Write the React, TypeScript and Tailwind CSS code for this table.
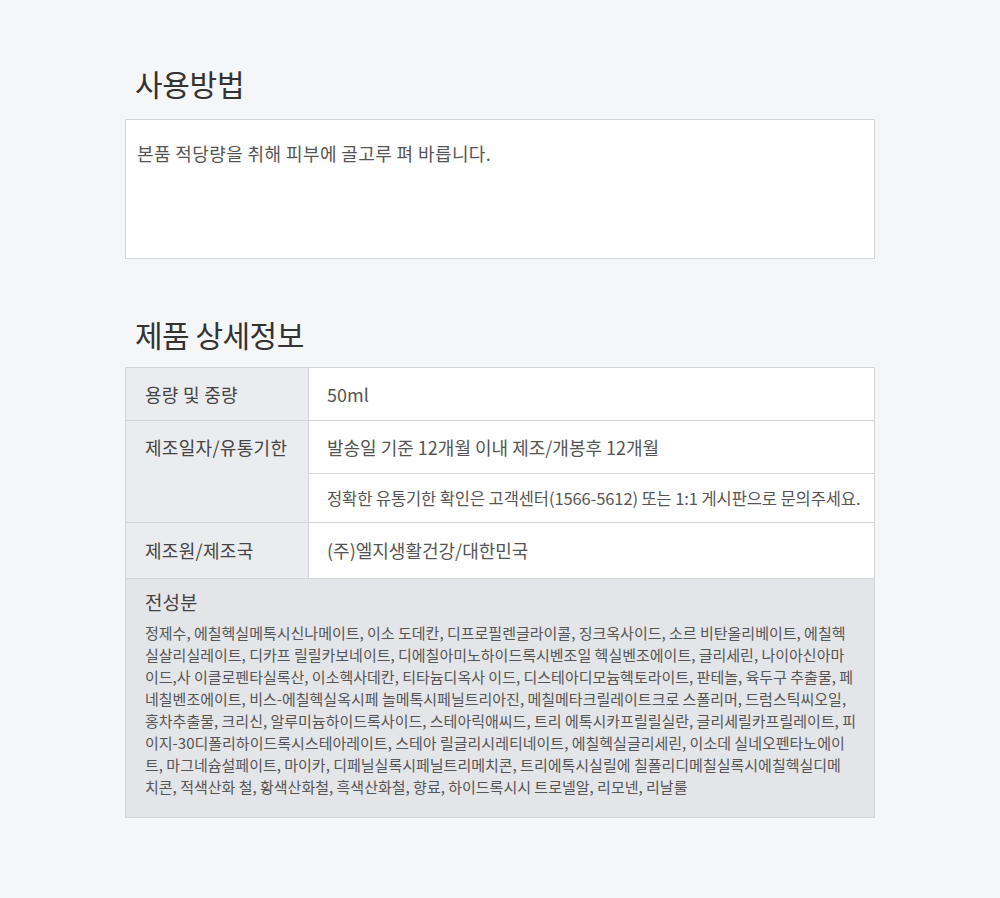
import React from 'react';

const ingredients = [
  '정제수, 에칠헥실메톡시신나메이트, 이소 도데칸, 디프로필렌글라이콜, 징크옥사이드, 소르 비탄올리베이트, 에칠헥',
  '실살리실레이트, 디카프 릴릴카보네이트, 디에칠아미노하이드록시벤조일 헥실벤조에이트, 글리세린, 나이아신아마',
  '이드,사 이클로펜타실록산, 이소헥사데칸, 티타늄디옥사 이드, 디스테아디모늄헥토라이트, 판테놀, 육두구 추출물, 페',
  '네칠벤조에이트, 비스-에칠헥실옥시페 놀메톡시페닐트리아진, 메칠메타크릴레이트크로 스폴리머, 드럼스틱씨오일,',
  '홍차추출물, 크리신, 알루미늄하이드록사이드, 스테아릭애씨드, 트리 에톡시카프릴릴실란, 글리세릴카프릴레이트, 피',
  '이지-30디폴리하이드록시스테아레이트, 스테아 릴글리시레티네이트, 에칠헥실글리세린, 이소데 실네오펜타노에이',
  '트, 마그네슘설페이트, 마이카, 디페닐실록시페닐트리메치콘, 트리에톡시실릴에 칠폴리디메칠실록시에칠헥실디메',
  '치콘, 적색산화 철, 황색산화철, 흑색산화철, 향료, 하이드록시시 트로넬알, 리모넨, 리날룰',
];

const font = { fontFamily: '"Noto Sans CJK KR", "Noto Sans", sans-serif' };

export default function App() {
  return (
    <div className="min-h-[898px] bg-[#f5f6f8] pt-[62px] pb-[80px]" style={font}>
      <div className="mx-auto w-[750px]">
        <h2 className="pl-[10px] text-[30px] leading-[42px] tracking-[-0.3px] text-[#333] font-normal">사용방법</h2>
        <div className="mt-[15px] h-[140px] border border-[#d4d5d8] bg-white px-[11px] pt-[19px]">
          <p className="text-[18px] leading-[28px] tracking-[0.4px] text-[#555]">본품 적당량을 취해 피부에 골고루 펴 바릅니다.</p>
        </div>

        <h2 className="mt-[54px] pl-[10px] text-[30px] leading-[42px] tracking-[-0.5px] text-[#333] font-normal">제품 상세정보</h2>
        <div className="mt-[12px] border border-[#d4d5d8] text-[18px]">
          <div className="flex h-[53px] border-b border-[#d4d5d8]">
            <div className="flex w-[182px] shrink-0 items-center bg-[#ebecf0] pl-[19px] tracking-[0.3px] text-[#444]">용량 및 중량</div>
            <div className="flex flex-1 items-center border-l border-[#d4d5d8] bg-white pl-[18px] text-[#555]">50ml</div>
          </div>
          <div className="flex border-b border-[#d4d5d8]">
            <div className="w-[182px] shrink-0 bg-[#ebecf0] pl-[19px] leading-[52px] tracking-[0.3px] text-[#444]">제조일자/유통기한</div>
            <div className="flex-1 border-l border-[#d4d5d8] bg-white text-[#555]">
              <div className="flex h-[53px] items-center border-b border-[#d4d5d8] pl-[18px]">발송일 기준 12개월 이내 제조/개봉후 12개월</div>
              <div className="flex h-[48px] items-center pl-[18px] text-[16.5px] tracking-[-0.1px]">정확한 유통기한 확인은 고객센터(1566-5612) 또는 1:1 게시판으로 문의주세요.</div>
            </div>
          </div>
          <div className="flex h-[56px] border-b border-[#d4d5d8]">
            <div className="flex w-[182px] shrink-0 items-center bg-[#ebecf0] pl-[19px] tracking-[0.3px] text-[#444]">제조원/제조국</div>
            <div className="flex flex-1 items-center border-l border-[#d4d5d8] bg-white pl-[18px] text-[#555]">(주)엘지생활건강/대한민국</div>
          </div>
          <div className="h-[238px] bg-[#e4e5e9] pl-[19px] pt-[10px]">
            <div className="text-[19px] leading-[26px] text-[#444]">전성분</div>
            <div className="mt-[7px] text-[15px] leading-[22px] text-[#555]">
              {ingredients.map((line) => (
                <div key={line} className="whitespace-nowrap">{line}</div>
              ))}
            </div>
          </div>
        </div>
      </div>
    </div>
  );
}
